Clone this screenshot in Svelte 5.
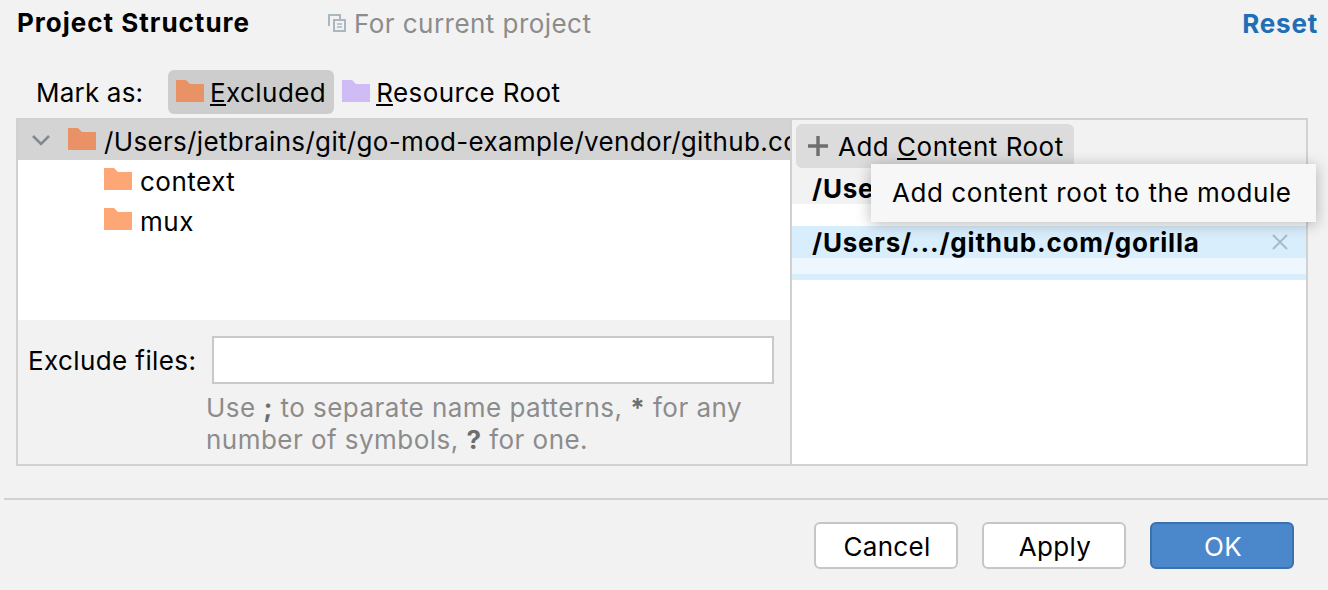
<script lang="ts">
  const children = ['context', 'mux'];
</script>

{#snippet folder(color: string)}
  <svg class="folder" width="28" height="22" viewBox="0 0 28 22">
    <path d="M0 0h10l4 4h14v18H0z" fill={color} />
  </svg>
{/snippet}

<div class="dialog">
  <header class="top">
    <h1>Project Structure</h1>
    <div class="scope">
      <svg width="18" height="18" viewBox="0 0 18 18" fill="none" stroke="#a9b7c1" stroke-width="2">
        <path d="M1 12V1h11v4" />
        <rect x="6" y="6" width="11" height="11" />
        <path d="M9 10h5M9 13h5" stroke-width="1.600" />
      </svg>
      <span>For current project</span>
    </div>
    <a class="reset" href="#reset">Reset</a>
  </header>

  <div class="mark-row">
    <span class="mark-label">Mark as:</span>
    <div class="mark-btn active">
      {@render folder('#e99265')}
      <span><u>E</u>xcluded</span>
    </div>
    <div class="mark-btn">
      {@render folder('#d0bcf5')}
      <span><u>R</u>esource Root</span>
    </div>
  </div>

  <div class="panel">
    <section class="left">
      <div class="tree">
        <div class="row selected">
          <svg class="chevron" width="18" height="12" viewBox="0 0 18 12" fill="none" stroke="#7f8b91" stroke-width="2.600">
            <path d="M1 2l8 8 8-8" />
          </svg>
          {@render folder('#e99265')}
          <span class="path">/Users/jetbrains/git/go-mod-example/vendor/github.com/gorilla</span>
        </div>
        {#each children as name}
          <div class="row child">
            {@render folder('#fda777')}
            <span class="name">{name}</span>
          </div>
        {/each}
      </div>
      <div class="exclude">
        <div class="exclude-row">
          <label for="exclude">Exclude files:</label>
          <input id="exclude" type="text" />
        </div>
        <p class="hint">
          Use <b>;</b> to separate name patterns, <b>*</b> for any<br />
          number of symbols, <b>?</b> for one.
        </p>
      </div>
    </section>

    <section class="right">
      <div class="toolbar">
        <div class="add-btn">
          <svg width="20" height="20" viewBox="0 0 20 20" fill="#6e6e6e">
            <path d="M8.300 0h3.400v8.300H20v3.400h-8.300V20H8.300v-8.300H0V8.300h8.300z" />
          </svg>
          <span>Add <u>C</u>ontent Root</span>
        </div>
      </div>
      <div class="root-title">/Users/jetbrains/git/go-mod-example</div>
      <div class="root-sel">
        <span>/Users/.../github.com/gorilla</span>
        <svg width="16" height="16" viewBox="0 0 16 16" stroke="#a9bac5" stroke-width="2">
          <path d="M1 1l14 14M15 1L1 15" />
        </svg>
      </div>
      <div class="root-pale"></div>
      <div class="root-edge"></div>

      <div class="tooltip">Add content root to the module</div>
    </section>
  </div>

  <footer class="actions">
    <button>Cancel</button>
    <button>Apply</button>
    <button class="primary">OK</button>
  </footer>
</div>

<style>
  :global(body) {
    margin: 0;
    background: #f2f2f2;
  }

  .dialog {
    width: 1328px;
    height: 590px;
    overflow: hidden;
    background: #f2f2f2;
    font-family: Inter, 'Noto Sans', sans-serif;
    font-size: 26px;
    letter-spacing: 0.5px;
    color: #000;
    display: flex;
    flex-direction: column;
  }

  .top {
    height: 46px;
    flex: none;
    display: flex;
    align-items: center;
    padding: 0 10px 0 17px;
  }

  h1 {
    margin: 0;
    font-size: 26px;
    font-weight: 700;
    letter-spacing: 1px;
    width: 311px;
    line-height: 46px;
  }

  .scope {
    display: flex;
    align-items: center;
    gap: 8px;
    color: #8c8c8c;
    letter-spacing: 0.45px;
  }

  .reset {
    margin-left: auto;
    color: #1f6fb5;
    font-weight: 700;
    letter-spacing: 0.8px;
    text-decoration: none;
  }

  .mark-row {
    height: 72px;
    flex: none;
    padding: 24px 0 0 36px;
    box-sizing: border-box;
    display: flex;
    align-items: flex-start;
    letter-spacing: 0.42px;
  }

  .mark-label {
    width: 132px;
    line-height: 46px;
    letter-spacing: 0.2px;
  }

  .mark-btn {
    height: 44px;
    padding: 0 8px;
    display: flex;
    align-items: center;
    gap: 6px;
    border-radius: 6px;
  }

  .mark-btn.active {
    background: #cdcdcd;
  }

  .folder {
    flex: none;
    margin-top: -2px;
  }

  .panel {
    margin-left: 16px;
    width: 1292px;
    height: 348px;
    flex: none;
    box-sizing: border-box;
    border: 2px solid #d1d1d1;
    display: flex;
    background: #fff;
  }

  .left {
    width: 774px;
    flex: none;
    box-sizing: border-box;
    border-right: 2px solid #d1d1d1;
    display: flex;
    flex-direction: column;
    overflow: hidden;
  }

  .tree {
    height: 200px;
    flex: none;
    background: #fff;
  }

  .row {
    height: 40px;
    display: flex;
    align-items: center;
    white-space: nowrap;
  }

  .row.selected {
    background: #d4d4d4;
    padding-left: 14px;
  }

  .chevron {
    flex: none;
    margin-right: 18px;
  }

  .path {
    margin-left: 8px;
    padding-top: 2px;
    letter-spacing: 0.33px;
  }

  .row.child {
    padding-left: 86px;
    gap: 8px;
  }

  .name {
    padding-top: 2px;
  }

  .exclude {
    flex: 1;
    background: #f2f2f2;
    padding: 16px 0 0 10px;
  }

  .exclude-row {
    display: flex;
    align-items: center;
    gap: 16px;
  }

  label {
    width: 168px;
    flex: none;
    white-space: nowrap;
    letter-spacing: 0.4px;
  }

  #exclude {
    width: 562px;
    height: 48px;
    flex: none;
    box-sizing: border-box;
    border: 2px solid #c9c9c9;
    background: #fff;
    outline: none;
    padding: 0;
  }

  .hint {
    margin: 8px 0 0 178px;
    color: #8c8c8c;
    line-height: 32px;
    white-space: nowrap;
    letter-spacing: 0.46px;
  }

  .hint b {
    color: #6e6e6e;
  }

  .right {
    flex: 1;
    min-width: 0;
    position: relative;
    background: #fff;
  }

  .toolbar {
    height: 50px;
    background: #f2f2f2;
    padding: 4px 0 0 4px;
    box-sizing: border-box;
  }

  .add-btn {
    width: 278px;
    height: 44px;
    background: #dcdcdc;
    border-radius: 6px;
    display: flex;
    align-items: center;
    gap: 10px;
    padding-left: 12px;
    box-sizing: border-box;
  }

  .add-btn svg {
    flex: none;
  }

  .root-title {
    height: 34px;
    background: #f2f2f2;
    padding-left: 20px;
    font-weight: 700;
    letter-spacing: 0.8px;
    line-height: 38px;
    white-space: nowrap;
    overflow: hidden;
  }

  .root-sel {
    margin-top: 22px;
    height: 32px;
    background: #d9eefd;
    padding: 0 18px 0 20px;
    font-weight: 700;
    letter-spacing: 0.8px;
    display: flex;
    align-items: center;
    justify-content: space-between;
  }

  .root-pale {
    height: 16px;
    background: #eef7fe;
  }

  .root-edge {
    height: 6px;
    background: #d9eefd;
  }

  .tooltip {
    position: absolute;
    left: 79px;
    top: 44px;
    width: 445px;
    height: 58px;
    box-sizing: border-box;
    padding-left: 21px;
    line-height: 58px;
    letter-spacing: 0.57px;
    background: #f7f7f7;
    white-space: nowrap;
    box-shadow: 0 2px 14px rgba(0, 0, 0, 0.28);
  }

  .actions {
    margin: 32px 0 0 4px;
    border-top: 2px solid #d1d1d1;
    padding: 22px 34px 0 0;
    display: flex;
    justify-content: flex-end;
    gap: 24px;
  }

  button {
    width: 144px;
    height: 47px;
    box-sizing: border-box;
    border: 2px solid #c6c6c6;
    border-radius: 6px;
    background: #fff;
    color: #000;
    font: inherit;
    letter-spacing: 0.3px;
    padding: 2px 0 0 2px;
  }

  button.primary {
    background: #4a87cb;
    border-color: #3a72b0;
    color: #fff;
  }
</style>
